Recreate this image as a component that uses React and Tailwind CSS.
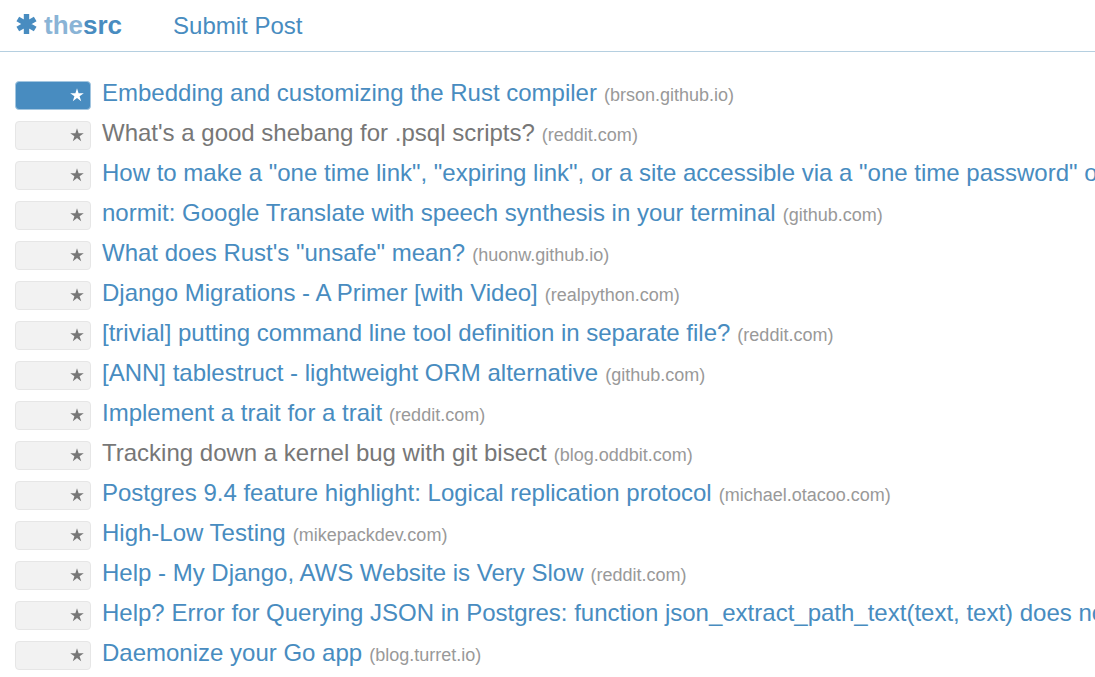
const posts = [
  { title: "Embedding and customizing the Rust compiler", site: "brson.github.io", voted: true },
  { title: "What's a good shebang for .psql scripts?", site: "reddit.com", visited: true },
  { title: 'How to make a "one time link", "expiring link", or a site accessible via a "one time password" or', site: "" },
  { title: "normit: Google Translate with speech synthesis in your terminal", site: "github.com" },
  { title: 'What does Rust\'s "unsafe" mean?', site: "huonw.github.io" },
  { title: "Django Migrations - A Primer [with Video]", site: "realpython.com" },
  { title: "[trivial] putting command line tool definition in separate file?", site: "reddit.com" },
  { title: "[ANN] tablestruct - lightweight ORM alternative", site: "github.com" },
  { title: "Implement a trait for a trait", site: "reddit.com" },
  { title: "Tracking down a kernel bug with git bisect", site: "blog.oddbit.com", visited: true },
  { title: "Postgres 9.4 feature highlight: Logical replication protocol", site: "michael.otacoo.com" },
  { title: "High-Low Testing", site: "mikepackdev.com" },
  { title: "Help - My Django, AWS Website is Very Slow", site: "reddit.com" },
  { title: "Help? Error for Querying JSON in Postgres: function json_extract_path_text(text, text) does not", site: "" },
  { title: "Daemonize your Go app", site: "blog.turret.io" },
];

function Asterisk() {
  return (
    <svg viewBox="0 0 22 22" className="mb-1 h-[22px] w-[22px]" aria-hidden="true">
      <g stroke="currentColor" strokeWidth="5.4">
        <path d="M11.5 1v20M2.8 6l17.4 10M20.2 6l-17.4 10" />
      </g>
    </svg>
  );
}

function Star() {
  return (
    <svg viewBox="0 0 14 14" className="mb-[2px] h-[14px] w-[14px]" fill="currentColor" aria-hidden="true">
      <path d="M7 0.3 8.6 5.2H13.8L9.6 8.2 11.2 13.2 7 10.1 2.8 13.2 4.4 8.2 0.2 5.2H5.4Z" />
    </svg>
  );
}

function Post({ post }) {
  return (
    <li className="flex h-10 items-start gap-[11px]">
      <button
        type="button"
        aria-label={`Vote for ${post.title}`}
        className={`mt-1 flex h-[29px] w-[76px] shrink-0 items-center justify-end rounded-[4px] border pr-[6px] ${
          post.voted ? "border-[#a3c6e0] bg-[#488cc0] text-white" : "border-[#e6e6e6] bg-[#f2f2f2] text-[#777777]"
        }`}
      >
        <Star />
      </button>
      <div className="whitespace-nowrap text-lg leading-8 text-[#999999]">
        <a href="#post" className={`text-2xl leading-8 ${post.visited ? "text-[#777777]" : "text-[#488cc0]"}`}>
          {post.title}
        </a>
        {post.site && <span className="ml-[7px]">({post.site})</span>}
      </div>
    </li>
  );
}

export default function App() {
  return (
    <div className="h-screen overflow-hidden bg-white font-['Liberation_Sans',Arial,sans-serif]">
      <header className="flex h-[52px] items-center border-b border-[#b5cfe0] px-[15px] text-[#488cc0]">
        <a href="#home" className="flex items-center gap-[7px] text-[26px] leading-8 font-bold">
          <Asterisk />
          <span className="mb-px"><span className="text-[#8ab4d6]">the</span>src</span>
        </a>
        <nav className="ml-[51px]">
          <a href="#submit" className="text-2xl leading-8">Submit Post</a>
        </nav>
      </header>
      <ul className="px-[15px] pt-[25px]">
        {posts.map((post) => <Post key={post.title} post={post} />)}
      </ul>
    </div>
  );
}
